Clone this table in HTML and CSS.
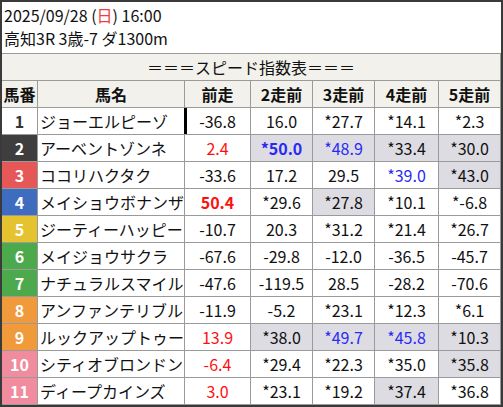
FILE: index.html
```html
<!DOCTYPE html>
<html lang="ja">
<head>
<meta charset="utf-8">
<link rel="stylesheet" href="styles.css">
</head>
<body>
<div class="frame">
  <div class="info">
    <div class="line">2025/09/28 (<span class="sun">日</span>) 16:00</div>
    <div class="line">高知3R 3歳-7 ダ1300m</div>
  </div>
  <div class="grid">
    <div class="title">＝＝＝スピード指数表＝＝＝</div>

    <div class="hd">馬番</div><div class="hd">馬名</div><div class="hd">前走</div><div class="hd">2走前</div><div class="hd">3走前</div><div class="hd">4走前</div><div class="hd">5走前</div>

    <div class="no c1">1</div><div class="name">ジョーエルピーゾ</div><div class="v cursor">-36.8</div><div class="v">16.0</div><div class="v">*27.7</div><div class="v">*14.1</div><div class="v">*2.3</div>

    <div class="no c2">2</div><div class="name">アーベントゾンネ</div><div class="v red">2.4</div><div class="v hl blue b">*50.0</div><div class="v hl blue">*48.9</div><div class="v hl">*33.4</div><div class="v hl">*30.0</div>

    <div class="no c3">3</div><div class="name">ココリハクタク</div><div class="v">-33.6</div><div class="v">17.2</div><div class="v">29.5</div><div class="v blue">*39.0</div><div class="v hl">*43.0</div>

    <div class="no c4">4</div><div class="name">メイショウボナンザ</div><div class="v red b">50.4</div><div class="v">*29.6</div><div class="v hl">*27.8</div><div class="v">*10.1</div><div class="v">*-6.8</div>

    <div class="no c5">5</div><div class="name">ジーティーハッピー</div><div class="v">-10.7</div><div class="v">20.3</div><div class="v">*31.2</div><div class="v">*21.4</div><div class="v">*26.7</div>

    <div class="no c6">6</div><div class="name">メイジョウサクラ</div><div class="v">-67.6</div><div class="v">-29.8</div><div class="v">-12.0</div><div class="v">-36.5</div><div class="v">-45.7</div>

    <div class="no c6">7</div><div class="name">ナチュラルスマイル</div><div class="v">-47.6</div><div class="v">-119.5</div><div class="v">28.5</div><div class="v">-28.2</div><div class="v">-70.6</div>

    <div class="no c8">8</div><div class="name">アンファンテリブル</div><div class="v">-11.9</div><div class="v">-5.2</div><div class="v">*23.1</div><div class="v">*12.3</div><div class="v">*6.1</div>

    <div class="no c8">9</div><div class="name">ルックアップトゥー</div><div class="v red">13.9</div><div class="v hl">*38.0</div><div class="v hl blue">*49.7</div><div class="v hl blue">*45.8</div><div class="v hl">*10.3</div>

    <div class="no c10">10</div><div class="name">シティオブロンドン</div><div class="v red">-6.4</div><div class="v">*29.4</div><div class="v">*22.3</div><div class="v">*35.0</div><div class="v hl">*35.8</div>

    <div class="no c10">11</div><div class="name">ディープカインズ</div><div class="v red">3.0</div><div class="v">*23.1</div><div class="v">*19.2</div><div class="v hl">*37.4</div><div class="v">*36.8</div>
  </div>
</div>
</body>
</html>
```

FILE: styles.css
```css
* { box-sizing: border-box; }
html, body { margin: 0; padding: 0; background: #ffffff; }
body {
  font-family: "Noto Sans CJK JP", "Noto Sans", sans-serif;
  font-size: 16px;
  color: #111;
}
.frame {
  width: 503px;
  height: 407px;
  border: 2px solid #3a3a3a;
  background: #fff;
  display: flex;
  flex-direction: column;
}
.info {
  height: 51px;
  padding: 2px 0 0 2px;
}
.line { line-height: 23.2px; white-space: nowrap; }
.sun { color: #f03c3c; }
.grid {
  display: grid;
  grid-template-columns: 35px 146px 65px 61px 61px 63px 61px;
  grid-auto-rows: 26px;
  gap: 1px;
  background: #9a9a9a;
  border-top: 1px solid #9a9a9a;
  border-right: 1px solid #9a9a9a;
  border-bottom: 1px solid #9a9a9a;
}
.grid > div {
  background: #fff;
  display: flex;
  align-items: center;
  justify-content: center;
  white-space: nowrap;
  overflow: hidden;
}
.grid > .title {
  grid-column: 1 / -1;
  background: #f2f1ec;
}
.grid > .hd {
  background: #f2f1ec;
  font-weight: bold;
}
.grid > .name {
  justify-content: flex-start;
  padding-left: 2px;
}
.grid > .no {
  font-weight: bold;
  color: #fff;
}
.grid > .c1 { background: #fff; color: #333; }
.grid > .c2 { background: #3e3e3e; }
.grid > .c3 { background: #e65757; }
.grid > .c4 { background: #3e6cbf; }
.grid > .c5 { background: #e5c22f; }
.grid > .c6 { background: #4caa4c; }
.grid > .c8 { background: #f09a3c; }
.grid > .c10 { background: #f08c9e; }
.grid > .hl { background: #dcdce2; }
.red { color: #ff1010; }
.blue { color: #2a2af5; }
.b { font-weight: bold; }
.cursor { box-shadow: -1px 0 0 #000, inset 2px 0 0 #000; }
```
